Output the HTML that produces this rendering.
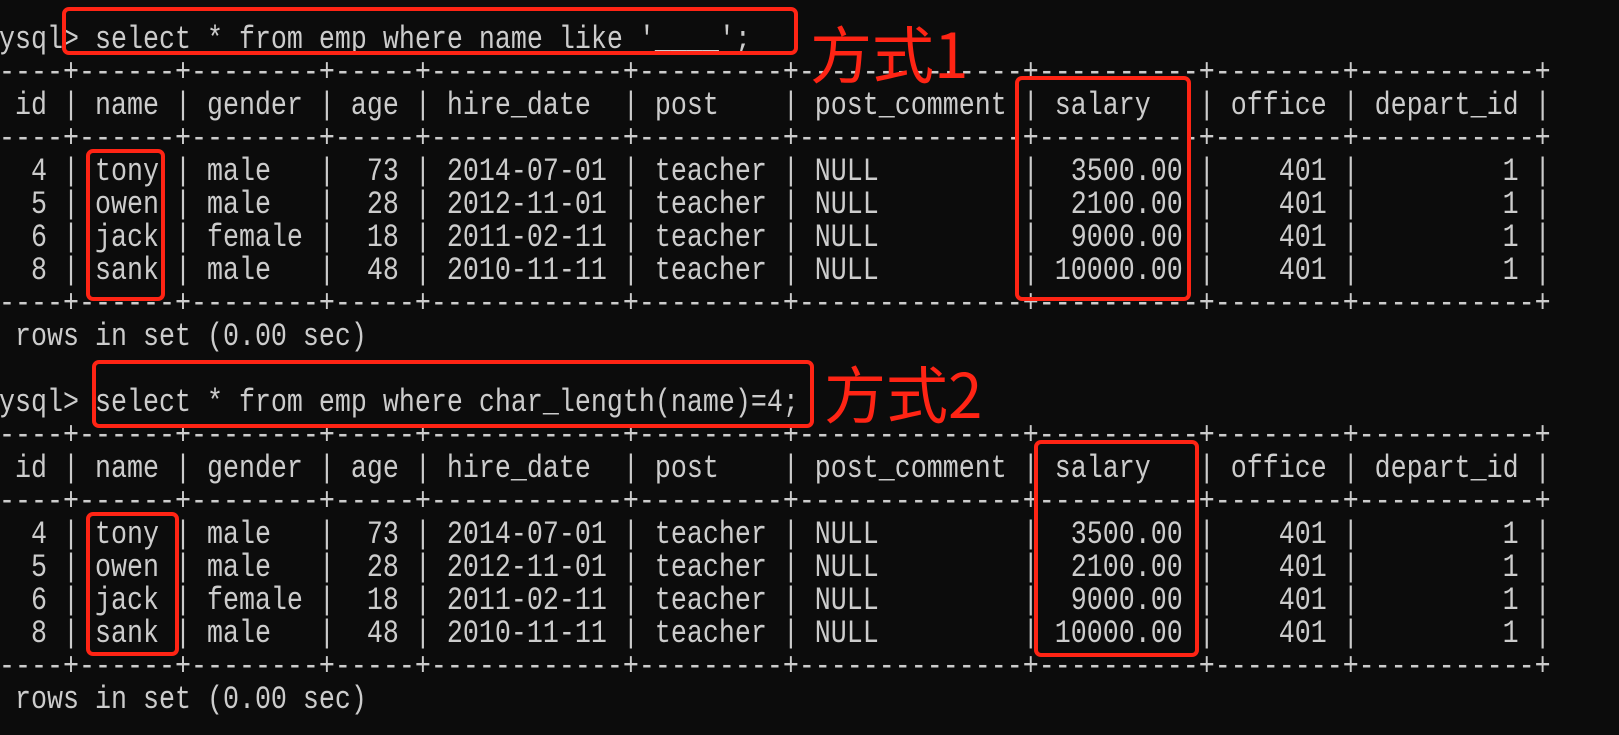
<!DOCTYPE html>
<html><head><meta charset="utf-8"><style>
html,body{margin:0;padding:0;background:#0c0c0c;width:1619px;height:735px;overflow:hidden;position:relative}
.l{position:absolute;left:-17px;height:33px;line-height:33px;font-family:"Liberation Mono",monospace;font-size:26.67px;color:#cccccc;white-space:pre;transform:scaleY(1.22);transform-origin:0 50%}
.b{position:absolute;border:4px solid #ff2414;border-radius:7px;box-sizing:border-box}
.c{position:absolute;font-family:"Noto Sans CJK SC","WenQuanYi Zen Hei",sans-serif;color:#ff2414;font-size:62px;line-height:62px;white-space:nowrap}
</style></head><body>
<div class="l" style="top:25px">mysql&gt; select * from emp where name like '____';</div>
<div class="l" style="top:58px">+----+------+--------+-----+------------+---------+--------------+----------+--------+-----------+</div>
<div class="l" style="top:91px">| id | name | gender | age | hire_date  | post    | post_comment | salary   | office | depart_id |</div>
<div class="l" style="top:124px">+----+------+--------+-----+------------+---------+--------------+----------+--------+-----------+</div>
<div class="l" style="top:157px">|  4 | tony | male   |  73 | 2014-07-01 | teacher | NULL         |  3500.00 |    401 |         1 |</div>
<div class="l" style="top:190px">|  5 | owen | male   |  28 | 2012-11-01 | teacher | NULL         |  2100.00 |    401 |         1 |</div>
<div class="l" style="top:223px">|  6 | jack | female |  18 | 2011-02-11 | teacher | NULL         |  9000.00 |    401 |         1 |</div>
<div class="l" style="top:256px">|  8 | sank | male   |  48 | 2010-11-11 | teacher | NULL         | 10000.00 |    401 |         1 |</div>
<div class="l" style="top:289px">+----+------+--------+-----+------------+---------+--------------+----------+--------+-----------+</div>
<div class="l" style="top:322px">4 rows in set (0.00 sec)</div>
<div class="l" style="top:388px">mysql&gt; select * from emp where char_length(name)=4;</div>
<div class="l" style="top:421px">+----+------+--------+-----+------------+---------+--------------+----------+--------+-----------+</div>
<div class="l" style="top:454px">| id | name | gender | age | hire_date  | post    | post_comment | salary   | office | depart_id |</div>
<div class="l" style="top:487px">+----+------+--------+-----+------------+---------+--------------+----------+--------+-----------+</div>
<div class="l" style="top:520px">|  4 | tony | male   |  73 | 2014-07-01 | teacher | NULL         |  3500.00 |    401 |         1 |</div>
<div class="l" style="top:553px">|  5 | owen | male   |  28 | 2012-11-01 | teacher | NULL         |  2100.00 |    401 |         1 |</div>
<div class="l" style="top:586px">|  6 | jack | female |  18 | 2011-02-11 | teacher | NULL         |  9000.00 |    401 |         1 |</div>
<div class="l" style="top:619px">|  8 | sank | male   |  48 | 2010-11-11 | teacher | NULL         | 10000.00 |    401 |         1 |</div>
<div class="l" style="top:652px">+----+------+--------+-----+------------+---------+--------------+----------+--------+-----------+</div>
<div class="l" style="top:685px">4 rows in set (0.00 sec)</div>

<div class="b" style="left:62px;top:7px;width:736px;height:48px"></div>
<div class="b" style="left:86px;top:149px;width:79px;height:152px"></div>
<div class="b" style="left:1015px;top:76px;width:176px;height:225px"></div>
<div class="b" style="left:92px;top:360px;width:722px;height:68px"></div>
<div class="b" style="left:86px;top:512px;width:93px;height:144px"></div>
<div class="b" style="left:1034px;top:440px;width:165px;height:217px"></div>

<div class="c" style="left:810px;top:20px">方式1</div>
<div class="c" style="left:824px;top:360px">方式2</div>
</body></html>
